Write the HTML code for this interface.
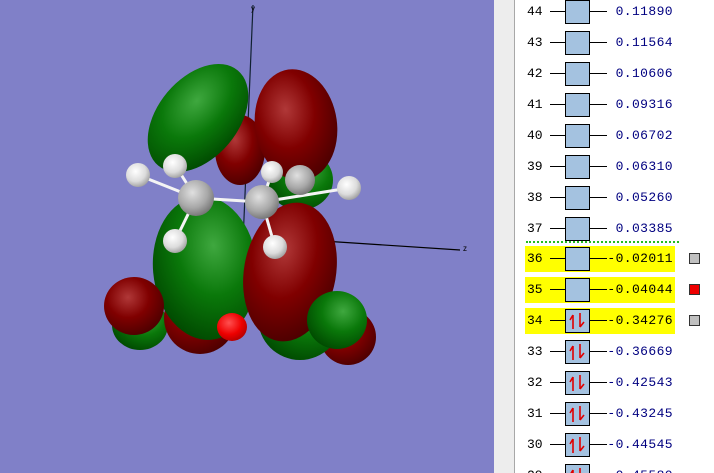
<!DOCTYPE html>
<html style="overflow:hidden;height:473px"><head><style>
body{margin:0;width:714px;height:473px;overflow:hidden;background:#8080c8;position:relative;font-family:"Liberation Mono",monospace}
#view{position:absolute;left:0;top:0}
#panel{position:absolute;left:494px;top:0;width:220px;height:473px;background:#fff;overflow:hidden}
#strip{position:absolute;left:0;top:0;width:20px;height:473px;background:#ededed;border-right:1px solid #a8a8a8}
.row{position:absolute;left:0;width:220px;height:31px}
.hl{position:absolute;left:31px;top:-1px;width:150px;height:26px;background:#ffff00}
.num{position:absolute;left:33px;top:4px;font-size:13px;color:#000}
.ln{position:absolute;top:11px;height:1px;background:#000}
.box{position:absolute;left:71px;top:0;width:23px;height:22px;background:#a4c2e0;border:1px solid #000}
.val{position:absolute;right:41px;top:4px;font-size:13px;color:#000080;letter-spacing:0.4px}
.sq{position:absolute;left:195px;top:6px;width:9px;height:9px;border:1px solid #333;background:#c0c0c0}
</style></head><body>
<svg id="view" width="494" height="473" viewBox="0 0 494 473">
<defs>
<radialGradient id="g" cx="0.6" cy="0.35" r="0.7"><stop offset="0" stop-color="#3fa83f"/><stop offset="0.5" stop-color="#0a780a"/><stop offset="1" stop-color="#004800"/></radialGradient>
<radialGradient id="r" cx="0.4" cy="0.35" r="0.7"><stop offset="0" stop-color="#b03838"/><stop offset="0.5" stop-color="#800000"/><stop offset="1" stop-color="#4a0000"/></radialGradient>
<radialGradient id="w" cx="0.4" cy="0.35" r="0.7"><stop offset="0" stop-color="#ffffff"/><stop offset="0.6" stop-color="#dcdcdc"/><stop offset="1" stop-color="#9a9a9a"/></radialGradient>
<radialGradient id="c" cx="0.4" cy="0.35" r="0.7"><stop offset="0" stop-color="#e0e0e0"/><stop offset="0.6" stop-color="#a8a8a8"/><stop offset="1" stop-color="#707070"/></radialGradient>
<radialGradient id="o" cx="0.4" cy="0.35" r="0.7"><stop offset="0" stop-color="#ff5050"/><stop offset="0.6" stop-color="#ee0000"/><stop offset="1" stop-color="#b00000"/></radialGradient>
</defs>
<line x1="253" y1="5" x2="243" y2="242" stroke="#102030" stroke-width="1.2"/>
<text x="251" y="11" font-size="8" fill="#000" font-family="Liberation Sans">y</text>
<line x1="323" y1="241" x2="460" y2="250" stroke="#000" stroke-width="1.2"/>
<text x="463" y="251" font-size="8" fill="#000" font-family="Liberation Sans">z</text>
<ellipse cx="240" cy="150" rx="25" ry="35" fill="url(#r)"/>
<ellipse cx="300" cy="180" rx="33" ry="30" fill="url(#g)"/>
<ellipse cx="140" cy="325" rx="28" ry="25" fill="url(#g)"/>
<ellipse cx="348" cy="337" rx="28" ry="28" fill="url(#r)"/>
<ellipse cx="300" cy="318" rx="42" ry="42" fill="url(#g)"/>
<ellipse cx="200" cy="318" rx="36" ry="36" fill="url(#r)"/>
<ellipse cx="198" cy="118" rx="62" ry="40" transform="rotate(-50 198 118)" fill="url(#g)"/>
<ellipse cx="296" cy="125" rx="41" ry="56" transform="rotate(-8 296 125)" fill="url(#r)"/>
<ellipse cx="205" cy="268" rx="52" ry="72" transform="rotate(-5 205 268)" fill="url(#g)"/>
<ellipse cx="290" cy="272" rx="46" ry="70" transform="rotate(10 290 272)" fill="url(#r)"/>
<ellipse cx="134" cy="306" rx="30" ry="29" fill="url(#r)"/>
<ellipse cx="337" cy="320" rx="30" ry="29" fill="url(#g)"/>
<ellipse cx="232" cy="327" rx="15" ry="14" fill="url(#o)"/>
<g stroke="#f4f4f4" stroke-width="3">
<line x1="196" y1="198" x2="262" y2="202"/>
<line x1="196" y1="198" x2="138" y2="175"/>
<line x1="196" y1="198" x2="175" y2="241"/>
<line x1="262" y1="202" x2="275" y2="247"/>
<line x1="262" y1="202" x2="349" y2="188"/>
<line x1="262" y1="202" x2="272" y2="172"/>
<line x1="196" y1="198" x2="175" y2="165"/>
</g>
<circle cx="300" cy="180" r="15" fill="url(#c)"/>
<circle cx="138" cy="175" r="12" fill="url(#w)"/>
<circle cx="175" cy="166" r="12" fill="url(#w)"/>
<circle cx="196" cy="198" r="18" fill="url(#c)"/>
<circle cx="262" cy="202" r="17" fill="url(#c)"/>
<circle cx="272" cy="172" r="11" fill="url(#w)"/>
<circle cx="349" cy="188" r="12" fill="url(#w)"/>
<circle cx="175" cy="241" r="12" fill="url(#w)"/>
<circle cx="275" cy="247" r="12" fill="url(#w)"/>
</svg>
<div id="panel">
<div id="strip"></div>
<div style="position:absolute;left:32px;top:241px;width:153px;border-top:2px dotted #22bb22"></div>
<div id="rows"></div>
</div>
<script>
var d=[[44,"0.11890"],[43,"0.11564"],[42,"0.10606"],[41,"0.09316"],[40,"0.06702"],[39,"0.06310"],[38,"0.05260"],[37,"0.03385"],[36,"-0.02011"],[35,"-0.04044"],[34,"-0.34276"],[33,"-0.36669"],[32,"-0.42543"],[31,"-0.43245"],[30,"-0.44545"],[29,"-0.45580"]];
var h="";
d.forEach(function(e,k){
var y=(k<8?31*k:247+31*(k-8));
var n=e[0],occ=n<=34,hl=(n>=34&&n<=36);
h+='<div class="row" style="top:'+y+'px">';
if(hl)h+='<div class="hl"></div>';
h+='<div class="num">'+n+'</div><div class="ln" style="left:56px;width:15px"></div><div class="ln" style="left:96px;width:17px"></div><div class="box">';
if(occ)h+='<svg width="23" height="22"><path d="M7 19V5M7 5L4 10" stroke="#e00000" stroke-width="1.6" fill="none"/><path d="M14 3V17M14 17L18 12" stroke="#e00000" stroke-width="1.6" fill="none"/></svg>';
h+='</div><div class="val" style="color:'+(hl?'#000':'#000080')+'">'+e[1]+'</div>';
if(hl)h+='<div class="sq" style="background:'+(n==35?'#ee0000':'#c0c0c0')+'"></div>';
h+='</div>';
});
document.getElementById('rows').innerHTML=h;
</script>
</body></html>
